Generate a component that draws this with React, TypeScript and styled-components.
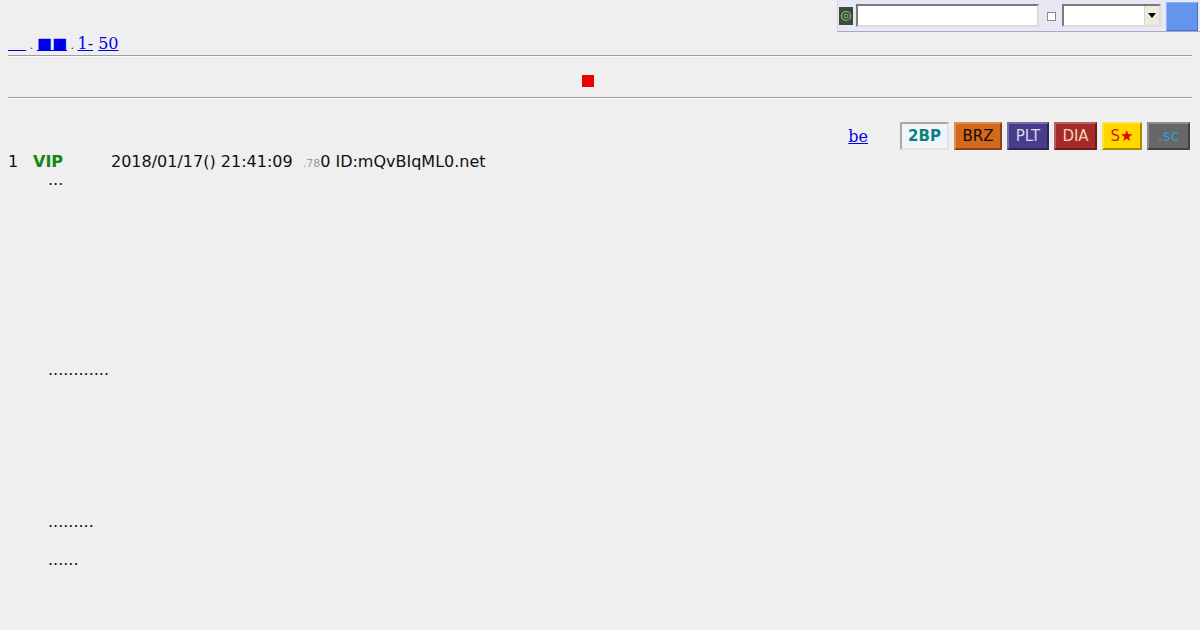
import styled, { createGlobalStyle } from "styled-components";

const GlobalStyle = createGlobalStyle`
  body {
    margin: 0;
    background: #efefef;
    font-family: "DejaVu Sans", sans-serif;
    font-size: 16px;
    color: #111;
  }
`

const Page = styled.div`
  padding: 0 8px 8px;
`

const TopBar = styled.form`
  display: flex;
  align-items: center;
  width: 363px;
  height: 32px;
  margin: 0 -8px 0 auto;
  padding: 0 2px 0 1px;
  box-sizing: border-box;
  background: #e7e7f6;
  border-left: 1px solid #d4d4e6;
  border-bottom: 1px solid #a9a9c4;
`

const Badge = styled.div`
  width: 14px;
  height: 18px;
  background: #3d4a3d;
  display: flex;
  align-items: center;
  justify-content: center;
`

const SearchInput = styled.div`
  box-sizing: border-box;
  width: 183px;
  height: 23px;
  margin-left: 3px;
  background: #fff;
  border: 2px solid;
  border-color: #7a7a7a #dcdcdc #dcdcdc #7a7a7a;
`

const Check = styled.div`
  width: 7px;
  height: 7px;
  margin: 2px 0 0 8px;
  background: #fff;
  border: 1px solid #8a8a8a;
`

const Select = styled.div`
  box-sizing: border-box;
  display: flex;
  justify-content: flex-end;
  width: 99px;
  height: 23px;
  margin-left: 6px;
  background: #fffffd;
  border: 2px solid;
  border-color: #7a7a7a #dcdcdc #dcdcdc #7a7a7a;

  .arrow {
    width: 14px;
    background: #efe9de;
    border-left: 1px solid #d9d2c5;
    display: flex;
    align-items: center;
    justify-content: center;
  }
`

const Go = styled.div`
  box-sizing: border-box;
  width: 32px;
  height: 29px;
  margin: 1px 0 0 auto;
  background: #6495ed;
  border: 1px solid;
  border-color: #8fb1f2 #4a72c4 #4a72c4 #8fb1f2;
`

const Nav = styled.div`
  margin-top: 2px;
  font-family: "DejaVu Serif", serif;
  font-size: 16px;
  line-height: 19px;

  a {
    color: #0000ee;
  }
  .blank {
    letter-spacing: 1px;
  }
  .dot {
    font-size: 11px;
    color: #333;
  }
`

const Rule = styled.hr<{ $gap: number }>`
  margin: ${(p) => p.$gap}px 0 0;
  height: 0;
  border: 0;
  border-top: 1px solid #9c9c9c;
  border-bottom: 1px solid #fafafa;
`

const Banner = styled.div`
  height: 40px;
  display: flex;
  align-items: center;
  justify-content: center;
  margin-top: -2px;
`

const RedSquare = styled.span`
  width: 12px;
  height: 12px;
  margin: 12px 24px 0 0;
  background: #ee0000;
`

const ToolRow = styled.div`
  display: flex;
  justify-content: flex-end;
  align-items: center;
  gap: 5px;
  margin: 23px 2px 0 0;

  .be {
    font-family: "DejaVu Serif", serif;
    color: #0000ee;
    margin-right: 27px;
  }
`

const BoardButton = styled.span<{ $bg: string; $fg: string; $w: number; $inset?: boolean }>`
  box-sizing: border-box;
  width: ${(p) => p.$w}px;
  height: 28px;
  display: flex;
  align-items: center;
  justify-content: center;
  font-size: 15px;
  font-weight: ${(p) => (p.$inset ? "bold" : "normal")};
  background: ${(p) => p.$bg};
  color: ${(p) => p.$fg};
  border: 2px solid;
  border-color: ${(p) =>
    p.$inset
      ? "#a8a8a8 #e4e4e4 #e4e4e4 #a8a8a8"
      : "rgba(255,255,255,0.25) rgba(0,0,0,0.35) rgba(0,0,0,0.35) rgba(255,255,255,0.25)"};

  .star {
    color: #e00000;
  }
`

const Post = styled.dl`
  margin: 2px 0 0;
  line-height: 19px;

  dt {
    display: flex;
    align-items: baseline;
    height: 18px;
  }
  .num {
    width: 25px;
  }
  .name {
    width: 78px;
    color: #118811;
    font-weight: bold;
  }
  .ms {
    font-size: 11px;
    color: #999;
    margin-left: 10px;
  }
  dd {
    margin: 0 0 0 40px;
  }
`

const buttons = [
  { label: "2BP", bg: "#eef6fb", fg: "#117e7e", w: 49, inset: true },
  { label: "BRZ", bg: "#d2691e", fg: "#1a0a00", w: 48 },
  { label: "PLT", bg: "#483d8b", fg: "#d8d8f0", w: 42 },
  { label: "DIA", bg: "#a52a2a", fg: "#f7d3b4", w: 43 },
  { label: "S", bg: "#ffd700", fg: "#d02000", w: 40, star: true },
  { label: ".sc", bg: "#676767", fg: "#2f9fd8", w: 43 },
]

const lines = [
  "...", "", "", "", "", "", "", "", "", "",
  "............", "", "", "", "", "", "", "",
  ".........", "",
  "......",
]

function App() {
  return (
    <Page>
      <GlobalStyle />
      <TopBar>
        <Badge>
          <svg width="12" height="12" viewBox="0 0 12 12">
            <circle cx="6" cy="6" r="4.5" fill="none" stroke="#7fbf6f" strokeWidth="1.2" />
            <circle cx="6" cy="6" r="2" fill="none" stroke="#7fbf6f" strokeWidth="1" />
          </svg>
        </Badge>
        <SearchInput />
        <Check />
        <Select>
          <div className="arrow">
            <svg width="8" height="5" viewBox="0 0 8 5">
              <path d="M0 0h8L4 5z" fill="#000" />
            </svg>
          </div>
        </Select>
        <Go />
      </TopBar>

      <Nav>
        <a href="#" className="blank">{"\u00a0\u00a0\u00a0"}</a>
        <span className="dot"> . </span>
        <a href="#">■■</a>
        <span className="dot"> . </span>
        <a href="#">1-</a> <a href="#">50</a>
      </Nav>
      <Rule $gap={0} />
      <Banner>
        <RedSquare />
      </Banner>
      <Rule $gap={2} />

      <ToolRow>
        <a href="#" className="be">be</a>
        {buttons.map((b) => (
          <BoardButton key={b.label} $bg={b.bg} $fg={b.fg} $w={b.w} $inset={b.inset}>
            {b.label}
            {b.star && <span className="star">★</span>}
          </BoardButton>
        ))}
      </ToolRow>

      <Post>
        <dt>
          <span className="num">1</span>
          <span className="name">VIP</span>
          <span>2018/01/17() 21:41:09</span>
          <span className="ms">.78</span>
          <span>0 ID:mQvBIqML0.net</span>
        </dt>
        <dd>
          {lines.map((l, i) => (
            <div key={i}>{l || "\u00a0"}</div>
          ))}
        </dd>
      </Post>
    </Page>
  );
}

export default App;
